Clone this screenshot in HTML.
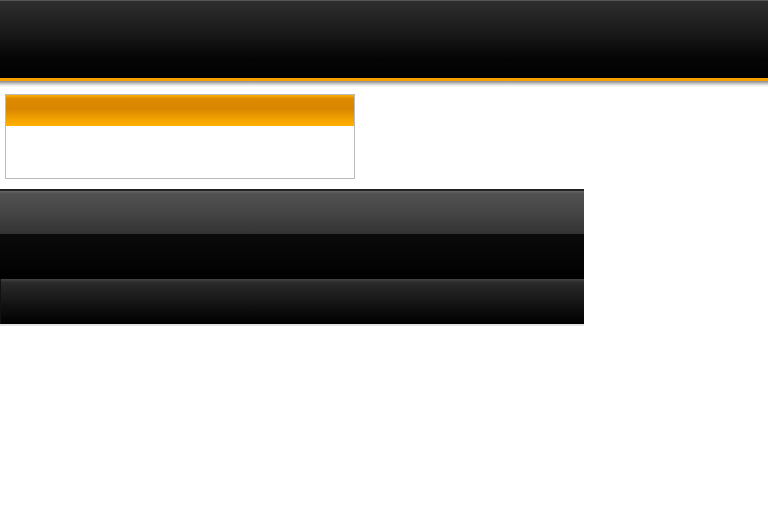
<!DOCTYPE html>
<html><head><style>
body{margin:0;width:768px;height:512px;background:#fff;position:relative;overflow:hidden;font-family:"Liberation Sans",sans-serif}
div{position:absolute;box-sizing:border-box}
</style></head><body>
<div style="left:0;top:0;width:768px;height:78px;border-top:1px solid #555;background:linear-gradient(#2e2e2e,#1a1a1a 40%,#050505 75%,#000)"></div>
<div style="left:0;top:78px;width:768px;height:3px;background:#f6a000"></div>
<div style="left:0;top:81px;width:768px;height:6px;background:linear-gradient(#888,#ddd 60%,#fff)"></div>
<div style="left:5px;top:94px;width:350px;height:85px;border:1px solid #bbb;background:#fff"></div>
<div style="left:6px;top:95px;width:348px;height:31px;background:linear-gradient(#ffb000,#dd8a00 12%,#d98700 45%,#f5a400 80%,#ffb000)"></div>
<div style="left:0;top:189px;width:584px;height:2px;background:#222"></div>
<div style="left:0;top:191px;width:584px;height:43px;background:linear-gradient(#6a6a6a,#525252 5%,#454545 50%,#333)"></div>
<div style="left:0;top:234px;width:584px;height:45px;background:linear-gradient(#0b0b0b,#000)"></div>
<div style="left:0;top:279px;width:584px;height:45px;background:linear-gradient(#444,#2a2a2a 8%,#111 60%,#000);border-left:1px solid #111"></div>
<div style="left:0;top:324px;width:584px;height:2px;background:#e4e4e4"></div>
</body></html>
